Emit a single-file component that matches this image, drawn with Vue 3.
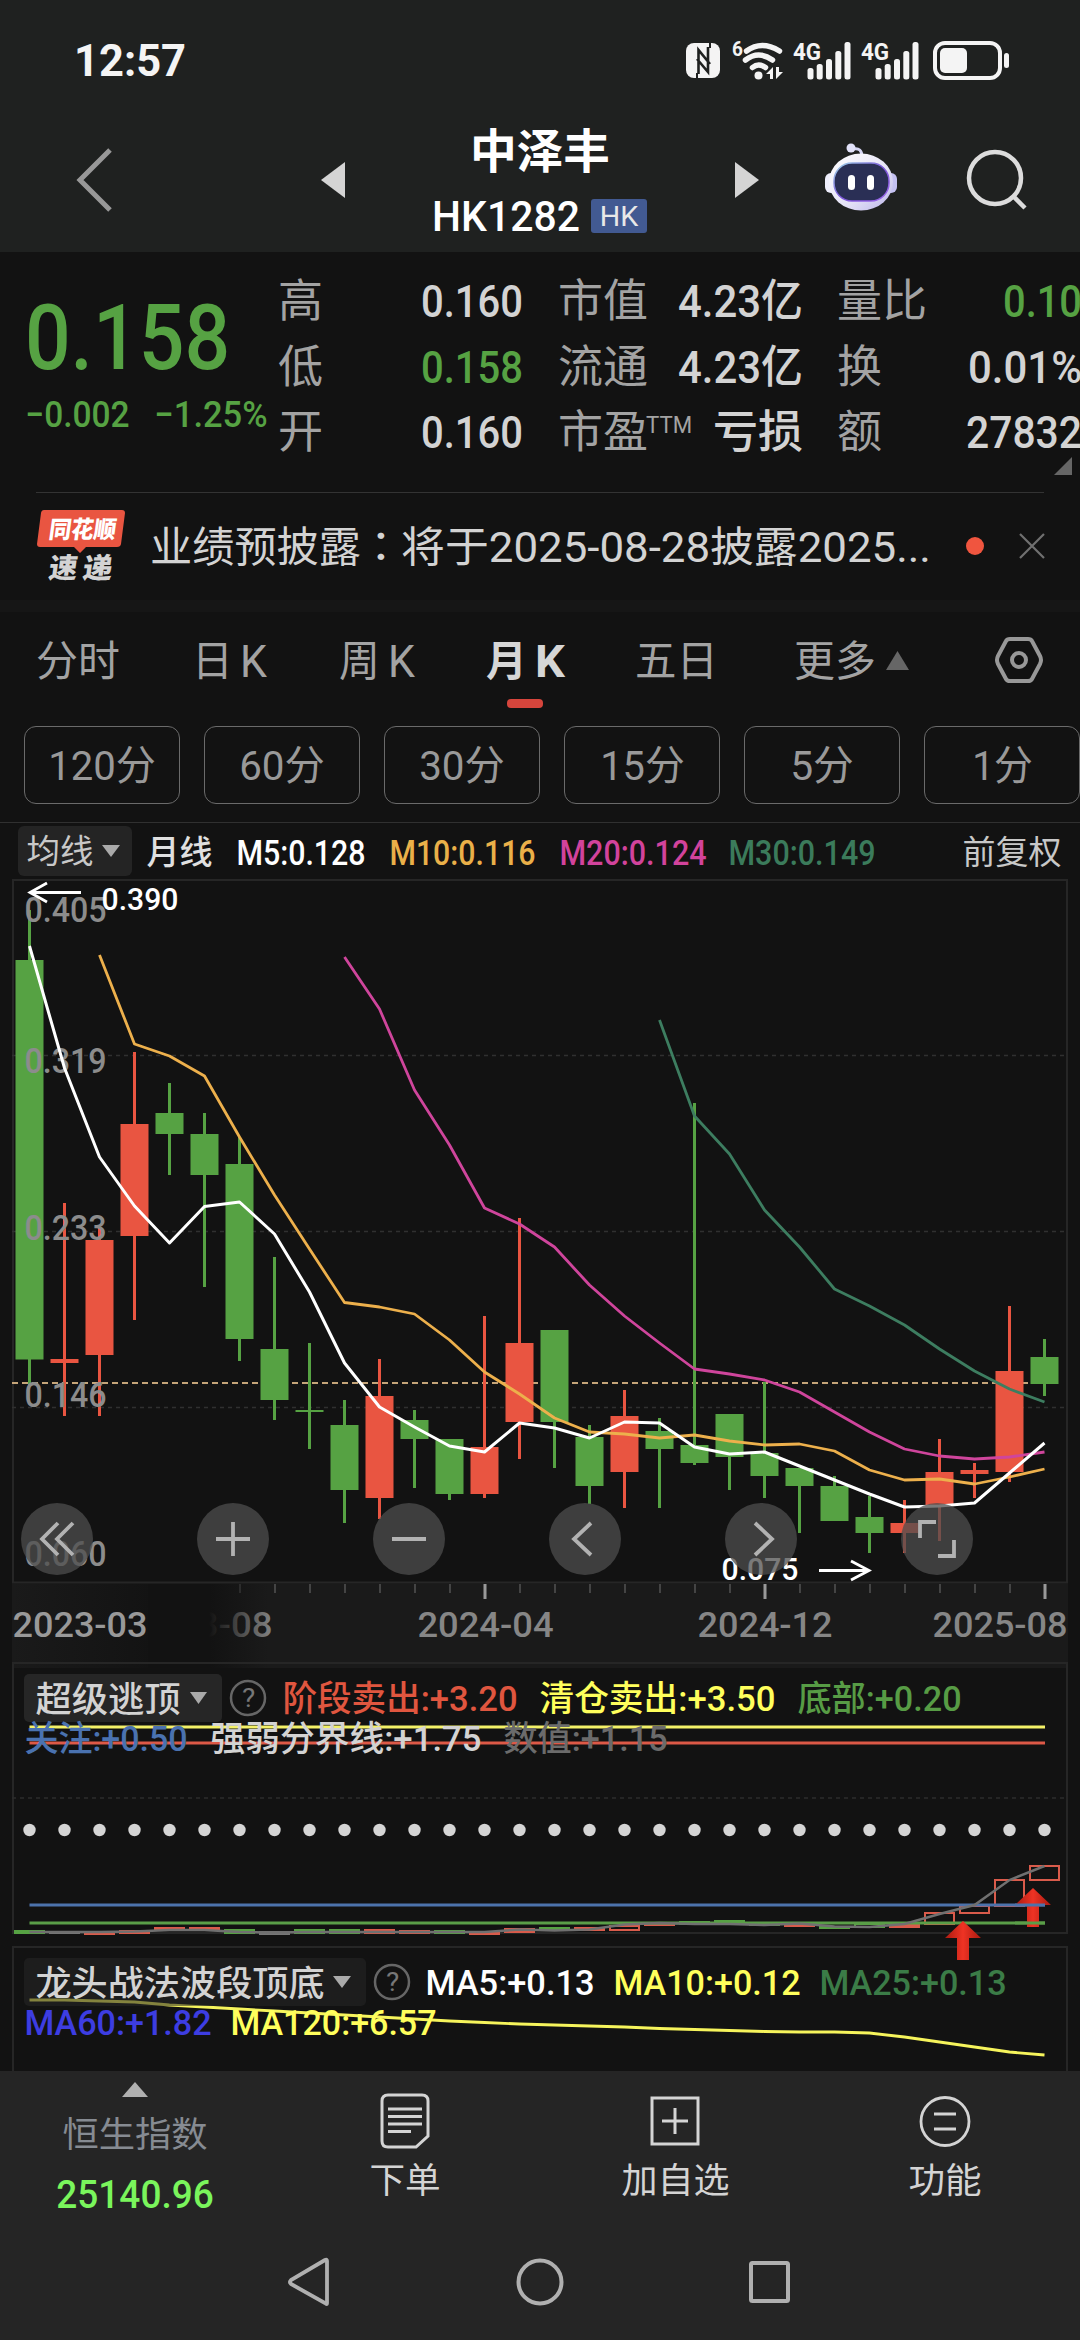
<script setup>
import { h } from 'vue'

// Single line of text whose box is its visible extent: w wide, cap-height tall
const Fit = (p) => {
  const cap = Number(p.h)
  const w = Number(p.w)
  const size = cap / 0.711
  const pad = size * 0.045
  return h('svg', { width: w, height: cap, overflow: 'visible', style: { flex: 'none', display: 'block' } }, [
    h('text', {
      x: -pad,
      y: cap,
      textLength: w + pad * 2,
      lengthAdjust: 'spacingAndGlyphs',
      'font-size': size,
      'font-weight': p.b || 400,
      fill: p.c || 'currentColor'
    }, p.t)
  ])
}
Fit.props = ['t', 'w', 'h', 'b', 'c']

const RED = '#e95541'
const GREEN = '#56a243'

const quote = [
  [
    { l: '高', lw: 41, v: '0.160', vw: 98 },
    { l: '低', lw: 41, v: '0.158', vw: 98, c: GREEN },
    { l: '开', lw: 41, v: '0.160', vw: 98 }
  ],
  [
    { l: '市值', lw: 86, v: '4.23亿', vw: 121 },
    { l: '流通', lw: 86, v: '4.23亿', vw: 121 },
    { l: '市盈', lw: 86, sup: 'TTM', v: '亏损', vw: 86 }
  ],
  [
    { l: '量比', lw: 86, v: '0.10', vw: 75, c: GREEN },
    { l: '换', lw: 41, v: '0.01%', vw: 110 },
    { l: '额', lw: 41, v: '27832', vw: 112 }
  ]
]

const chips = [
  ['120分', 104], ['60分', 82], ['30分', 82], ['15分', 81], ['5分', 60], ['1分', 57]
]

const px = (i) => 29.5 + 35 * i
const line = (start, ys) => ys.map((y, k) => `${px(start + k)},${y}`).join(' ')

// up flag, high, body top, body bottom, low
const candles = [
  [0, 910, 960, 1359.5, 1385], [1, 1203, 1359, 1363, 1416], [1, 1227, 1240, 1355, 1416],
  [1, 1052, 1124, 1236, 1320], [0, 1083, 1113, 1134, 1175], [0, 1113, 1134, 1175, 1287],
  [0, 1137, 1164, 1339, 1361], [0, 1257, 1349, 1400, 1420], [0, 1343, 1410, 1412, 1449],
  [0, 1400, 1425, 1490, 1523], [1, 1359, 1396, 1498, 1519], [0, 1410, 1420, 1439, 1488],
  [0, 1439, 1439, 1494, 1500], [1, 1316, 1447, 1494, 1498], [1, 1218, 1343, 1422, 1459],
  [0, 1330, 1330, 1422, 1468], [0, 1425, 1437, 1486, 1504], [1, 1390, 1416, 1472, 1508],
  [0, 1418, 1431, 1449, 1508], [0, 1103, 1445, 1463, 1465], [0, 1414, 1414, 1457, 1490],
  [0, 1382, 1453, 1476, 1498], [0, 1468, 1468, 1486, 1533], [0, 1476, 1486, 1521, 1521],
  [0, 1496, 1517, 1533, 1553], [1, 1500, 1523, 1533, 1553], [1, 1439, 1472, 1506, 1541],
  [1, 1463, 1470, 1474, 1498], [1, 1306, 1371, 1472, 1482], [0, 1339, 1357, 1384, 1396]
]

const averages = [
  { c: '#3d7d60', w: 2.8, p: line(18, [1020, 1116, 1154, 1210, 1247, 1289, 1306, 1325, 1349, 1371, 1389, 1402]) },
  { c: '#cf459c', w: 2.8, p: line(9, [957, 1009, 1090, 1145, 1208, 1224, 1247, 1285, 1316, 1343, 1369, 1374, 1380, 1392, 1412, 1432, 1449, 1456, 1459, 1457, 1452]) },
  { c: '#edb04c', w: 2.8, p: line(2, [955, 1044, 1056, 1076, 1137, 1195, 1249, 1302.5, 1307, 1314, 1340, 1372, 1394, 1418, 1432, 1434, 1438, 1435, 1441, 1445, 1444, 1451, 1470, 1480, 1479, 1484, 1477, 1469]) },
  { c: '#ffffff', w: 3, p: line(0, [946, 1068, 1157, 1206, 1243, 1206.5, 1202, 1234, 1292, 1363, 1407, 1427, 1446, 1452, 1423, 1428, 1438, 1422, 1423, 1447, 1454, 1452, 1466, 1480, 1494, 1507, 1506, 1503, 1473, 1443]) }
]

const scale = [['0.405', 897], ['0.319', 1048], ['0.233', 1215], ['0.146', 1382], ['0.060', 1541]]
const ticks = Array.from({ length: 24 }, (_, k) => k + 6)
const dots = Array.from({ length: 30 }, (_, k) => k)

// colour, top, bottom of each small indicator box
const boxes = [
  ['g', 1931, 1933], ['n', 1932, 1933], ['r', 1933, 1934], ['r', 1931, 1933], ['r', 1928, 1930], ['r', 1928, 1930],
  ['g', 1930, 1933], ['n', 1932, 1934], ['g', 1930, 1933], ['g', 1930, 1933], ['r', 1930, 1933], ['r', 1931, 1933],
  ['g', 1931, 1933], ['r', 1932, 1934], ['r', 1929, 1932], ['g', 1928, 1930], ['r', 1928, 1930], ['r', 1926, 1930],
  ['r', 1924, 1925], ['g', 1922, 1924], ['g', 1921, 1923], ['g', 1924, 1925], ['r', 1925, 1926], ['g', 1927, 1928],
  ['g', 1924, 1927], ['r', 1925, 1927], ['r', 1913, 1924], ['r', 1906, 1913], ['r', 1880, 1906], ['r', 1866, 1880]
]
const boxColor = { g: '#56a243', r: '#d95b4b', n: '#777' }
const trend = line(0, [1932, 1932, 1932, 1931.5, 1930, 1930, 1932, 1932.5, 1932, 1932, 1932, 1932, 1932, 1932, 1929.5, 1930.5, 1929.5, 1924.5, 1923, 1924, 1924, 1925, 1923.5, 1926.5, 1927, 1924, 1914, 1905, 1880, 1866])
const ma120 = line(0, [2000, 2000, 2001, 2002, 2005, 2007, 2009, 2011, 2013, 2015, 2017, 2019, 2021, 2022.5, 2024, 2025, 2026, 2027, 2028.5, 2029.5, 2030.5, 2031.5, 2032, 2032, 2033, 2037, 2042, 2047, 2052, 2055])

const tools = [
  'M37 20 21 36 37 52 M52 20 36 36 52 52',
  'M36 19V53 M19 36H53',
  'M19 36H53',
  'M42 20 25 36 42 52',
  'M30 20 47 36 30 52',
  'M19 35V19H35 M53 37V53H37'
]
</script>

<template>
  <main class="page">
    <header class="head">
      <div class="status">
        <Fit t="12:57" w="108" h="32" b="700" />
        <svg width="324" height="42" viewBox="686 38 324 42">
          <rect x="686" y="42" width="34" height="35" rx="8" fill="#f4f4f4" />
          <path d="M698.500 73V49L710 63M708 46v25L697 58" fill="none" stroke="#1f2120" stroke-width="2.600" />
          <path d="M697 78v-6M710 41v6" stroke="#1f2120" stroke-width="2" />
          <Fit t="6" x="733" y="40" w="9" h="15" b="700" />
          <g fill="none" stroke="#f4f4f4" stroke-width="5.500" stroke-linecap="round">
            <path d="M746.500 50q15-11 33 0" />
            <path d="M745.500 59q13-10 27 0" />
            <path d="M752.500 66.500q6-5 13 0" />
          </g>
          <circle cx="758.500" cy="74.500" r="4" fill="#f4f4f4" />
          <path d="M773 66v12h-3v-5h-4l7-7zM776 78V66h3v5h4l-7 7z" fill="#f4f4f4" />
          <g v-for="o in [0, 68]" :key="o" fill="#f4f4f4" :transform="`translate(${o} 0)`">
            <Fit t="4G" x="794" y="42" w="26" h="17" b="700" />
            <rect x="807.500" y="67" width="6" height="11.500" rx="2.500" />
            <rect x="816.700" y="63" width="6" height="15.500" rx="2.500" />
            <rect x="826" y="58" width="6" height="20.500" rx="2.500" />
            <rect x="835.300" y="50" width="6" height="28.500" rx="2.500" />
            <rect x="844.500" y="41" width="6" height="37.500" rx="2.500" />
          </g>
          <rect x="935" y="42" width="65" height="35" rx="10" fill="none" stroke="#f4f4f4" stroke-width="4" />
          <rect x="940" y="47" width="27" height="25" rx="5" fill="#f4f4f4" />
          <rect x="1004" y="52" width="5" height="15" rx="2.500" fill="#f4f4f4" />
        </svg>
      </div>
      <div class="nav">
        <svg class="back" width="36" height="64"><path d="M34 2 4 32 34 62" fill="none" stroke="#989898" stroke-width="5" /></svg>
        <svg class="prev" width="24" height="36"><path d="M24 0V36L0 18z" fill="#d4d4d4" /></svg>
        <div class="title">
          <Fit t="中泽丰" w="136" h="33" b="700" />
          <div class="code">
            <Fit t="HK1282" w="144" h="30" b="500" />
            <span class="market"><Fit t="HK" w="36" h="20" /></span>
          </div>
        </div>
        <svg class="next" width="24" height="36"><path d="M0 0V36L24 18z" fill="#d4d4d4" /></svg>
        <svg class="robot" width="72" height="68" viewBox="0 0 72 68">
          <defs>
            <linearGradient id="shell" x1="0" y1="0" x2="1" y2="1"><stop offset="0" stop-color="#fff" /><stop offset=".6" stop-color="#e4e2f6" /><stop offset="1" stop-color="#b9b3ea" /></linearGradient>
            <linearGradient id="rim" x1="0" y1="0" x2="1" y2="1"><stop offset="0" stop-color="#9fd8e8" /><stop offset=".5" stop-color="#7a55d8" /><stop offset="1" stop-color="#9c66ea" /></linearGradient>
          </defs>
          <path d="M28 6q9-2 9 8" fill="none" stroke="#d5d5f4" stroke-width="3" />
          <circle cx="26" cy="5" r="4.500" fill="#e2e2fa" />
          <rect x="0" y="30" width="14" height="20" rx="6" fill="#eeeefc" />
          <rect x="58" y="30" width="14" height="20" rx="6" fill="#c4c1f2" />
          <ellipse cx="36" cy="39" rx="32" ry="28.500" fill="url(#shell)" />
          <rect x="9" y="20" width="55" height="38" rx="18" fill="#2a2f55" stroke="url(#rim)" stroke-width="1.500" />
          <rect x="23" y="32" width="7" height="15" rx="3.500" fill="#fff" />
          <rect x="42" y="32" width="7" height="15" rx="3.500" fill="#fff" />
        </svg>
        <svg class="search" width="62" height="62"><g fill="none" stroke="#dcdcdc" stroke-width="4.500"><circle cx="29" cy="29" r="26" /><path d="M48 48 59 59" /></g></svg>
      </div>
    </header>

    <section class="quote">
      <div class="last">
        <Fit t="0.158" w="197" h="65" b="500" />
        <div class="delta">
          <Fit t="−0.002" w="101" h="26" b="500" />
          <Fit t="−1.25%" w="110" h="26" b="500" />
        </div>
      </div>
      <div v-for="(col, ci) in quote" :key="ci" class="col">
        <div v-for="r in col" :key="r.l" class="pair">
          <div class="label">
            <Fit :t="r.l" :w="r.lw" h="32" />
            <Fit v-if="r.sup" :t="r.sup" w="44" h="17" />
          </div>
          <Fit :t="r.v" :w="r.vw" h="32" b="500" :c="r.c || '#d3d3d3'" />
        </div>
      </div>
      <svg class="corner" width="18" height="18"><path d="M18 0V18H0z" fill="#666" /></svg>
    </section>

    <section class="news">
      <svg class="brand" width="90" height="74" viewBox="36 509 90 74">
        <path d="M44 510H122q3 0 3 3L121 544q-.5 3-4 3H86l-6 6-6-6H40q-3 0-3-3L41 513q.5-3 3-3z" fill="#e95541" />
        <g transform="translate(49 537.500) skewX(-8)"><Fit t="同花顺" y="-17" w="65" h="17" b="900" c="#fff" /></g>
        <g transform="translate(49 578) skewX(-8)"><Fit t="速" y="-20" w="26" h="20" b="900" c="#d3d3d3" /><Fit t="递" x="34" y="-20" w="27" h="20" b="900" c="#d3d3d3" /></g>
      </svg>
      <div class="headline">
        <Fit t="业绩预披露" w="207" h="30" />
        <Fit class="colon" t="：" w="40" h="30" />
        <Fit t="将于2025-08-28披露2025..." w="526" h="30" />
      </div>
      <i class="dot"></i>
      <svg class="close" width="26" height="26"><path d="M1 1 25 25M25 1 1 25" stroke="#707070" stroke-width="2.200" /></svg>
    </section>

    <nav class="tabs">
      <Fit t="分时" w="80" h="30" />
      <div class="tab dk"><Fit t="日" w="37" h="30" /><Fit t="K" w="23" h="31" /></div>
      <div class="tab wk"><Fit t="周" w="37" h="30" /><Fit t="K" w="23" h="31" /></div>
      <div class="tab mk"><Fit t="月" w="37" h="30" b="700" /><Fit t="K" w="26" h="31" b="700" /></div>
      <Fit class="fd" t="五日" w="79" h="30" />
      <Fit class="more" t="更多" w="78" h="30" />
      <svg class="caret" width="23" height="19"><path d="M11.500 0 23 19H0z" fill="#666" /></svg>
      <svg class="gear" width="48" height="46"><g fill="none" stroke="#989898" stroke-width="4"><path d="M15 2H33Q36 2 37 4L45 19Q47 23 45 27L37 42Q36 44 33 44H15Q12 44 11 42L3 27Q1 23 3 19L11 4Q12 2 15 2z" /><circle cx="24" cy="23" r="7" /></g></svg>
    </nav>

    <div class="chips">
      <span v-for="c in chips" :key="c[0]" class="chip"><Fit :t="c[0]" :w="c[1]" h="29" /></span>
    </div>

    <div class="legend">
      <span class="pick"><Fit t="均线" w="64" h="23.500" /><svg width="18" height="12"><path d="M0 0H18L9 12z" fill="#aaa" /></svg></span>
      <Fit class="g16" t="月线" w="63" h="23.500" b="500" c="#e0e0e0" />
      <Fit class="g27" t="M5:0.128" w="126" h="25" b="500" c="#fff" />
      <Fit class="g27" t="M10:0.116" w="143" h="25" b="500" c="#eab049" />
      <Fit class="g27" t="M20:0.124" w="144" h="25" b="500" c="#d2439c" />
      <Fit class="g25" t="M30:0.149" w="144" h="25" b="500" c="#3b7b5b" />
      <Fit class="adj" t="前复权" w="96" h="23.500" />
    </div>

    <section class="chart">
      <svg width="1080" height="1194" viewBox="0 877 1080 1194">
        <defs>
          <linearGradient id="axisL"><stop offset="0" stop-color="#121212" stop-opacity="0" /><stop offset=".62" stop-color="#121212" /><stop offset=".77" stop-color="#121212" /><stop offset="1" stop-color="#121212" stop-opacity="0" /></linearGradient>
          <linearGradient id="arrow" x1="0" y1="0" x2="1" y2="0"><stop offset="0" stop-color="#a81a10" /><stop offset=".5" stop-color="#ef3324" /><stop offset="1" stop-color="#a81a10" /></linearGradient>
        </defs>

        <path d="M13 1582.500V880H1067V1582.500z" fill="none" stroke="#262626" stroke-width="2" />
        <path d="M12 1055.500H1066M12 1231.500H1066M12 1407.500H1066" stroke="#303030" stroke-width="1.300" stroke-dasharray="4 4" />
        <path d="M12 1383H1062" stroke="#c4a479" stroke-width="2" stroke-dasharray="6 4" />
        <g v-for="(c, i) in candles" :key="i" :fill="c[0] ? RED : GREEN">
          <rect :x="px(i) - 1.500" :y="c[1]" width="3" :height="c[4] - c[1]" />
          <rect :x="px(i) - 14" :y="c[2]" width="28" :height="c[3] - c[2]" />
        </g>
        <Fit v-for="s in scale" :key="s[0]" :t="s[0]" x="26" :y="s[1]" w="79" h="25" b="500" c="#8c8c8c" />
        <polyline v-for="a in averages" :key="a.c" :points="a.p" :stroke="a.c" :stroke-width="a.w" fill="none" stroke-linejoin="round" />
        <g fill="none" stroke="#fff" stroke-width="2.800">
          <path d="M81 892.500H30M47 883 30 892.500 47 902" />
          <path d="M819 1570.500H869M851 1561 869 1570.500 851 1580" />
        </g>
        <Fit t="0.390" x="103" y="887.500" w="74" h="22.500" b="500" c="#fff" />
        <Fit t="0.075" x="723" y="1557.500" w="74" h="22.500" b="500" c="#fff" />

        <rect x="12" y="1584" width="1056" height="84" fill="#1a1a1a" />
        <g v-for="i in ticks" :key="i">
          <rect v-if="i === 13 || i === 21 || i === 29" :x="px(i) - 1" y="1584" width="3" height="15" fill="#999" />
          <rect v-else :x="px(i) - .5" y="1584" width="2" height="9" fill="#444" />
        </g>
        <Fit t="2023-08" x="137" y="1612" w="134" h="25" b="500" c="#7c7c7c" />
        <rect x="12" y="1584" width="136" height="84" fill="#1a1a1a" />
        <rect x="148" y="1584" width="57" height="84" fill="#121212" />
        <rect x="12" y="1584" width="256" height="84" fill="url(#axisL)" />
        <Fit t="2023-03" x="14" y="1612" w="132" h="25" b="500" c="#999" />
        <Fit t="2024-04" x="419" y="1612" w="133" h="25" b="500" c="#868686" />
        <Fit t="2024-12" x="699" y="1612" w="132" h="25" b="500" c="#868686" />
        <Fit t="2025-08" x="934" y="1612" w="132" h="25" b="500" c="#868686" />

        <path d="M13 1933V1663H1067V1933z" fill="none" stroke="#262626" stroke-width="2" />
        <path d="M12 1798H1066" stroke="#2c2c2c" stroke-width="1.500" stroke-dasharray="4 4" />
        <rect x="24" y="1674" width="198" height="48" rx="5" fill="#262626" />
        <path d="M29.500 1727H1045" stroke="#f3f168" stroke-width="3" />
        <path d="M29.500 1743H1045" stroke="#dd5947" stroke-width="3" />
        <circle v-for="i in dots" :key="i" :cx="px(i)" cy="1830" r="6.200" fill="#d5d5d5" />
        <rect v-for="(b, i) in boxes" :key="'b' + i" :x="px(i) - 14.500" :y="b[1]" width="29" :height="b[2] - b[1]" fill="none" :stroke="boxColor[b[0]]" stroke-width="2" />
        <path d="M29.500 1923H1045" stroke="#5a9e48" stroke-width="3" />
        <path d="M29.500 1905H1045" stroke="#4c72ab" stroke-width="3" />
        <polyline :points="trend" fill="none" stroke="#707070" stroke-width="2.500" />

        <path d="M13 2071V1947H1067V2071" fill="none" stroke="#262626" stroke-width="2" />
        <path v-for="a in [[963, 1921], [1033, 1888]]" :key="a[0]" :transform="`translate(${a[0]} ${a[1]})`" d="M0 0 18 17H6V39H-6V17H-18z" fill="url(#arrow)" />
        <path d="M1015 1905H1045" stroke="#4c72ab" stroke-width="3" />
        <path d="M1015 1923H1045" stroke="#5a9e48" stroke-width="3" />
        <polyline :points="ma120" fill="none" stroke="#f6f45c" stroke-width="2.800" />
        <rect x="24" y="1958" width="342" height="48" rx="5" fill="#262626" fill-opacity=".55" />

        <Fit t="超级逃顶" x="37" y="1687" w="142" h="25" b="500" c="#d3d3d3" />
        <path d="M190 1692H207L198.500 1704z" fill="#aaa" />
        <circle cx="248" cy="1698" r="17" fill="none" stroke="#666" stroke-width="2.500" />
        <Fit t="?" x="243" y="1689" w="11" h="18" c="#777" />
        <Fit t="阶段卖出:+3.20" x="284" y="1686" w="232" h="25" b="500" c="#e0563f" />
        <Fit t="清仓卖出:+3.50" x="541" y="1686" w="233" h="25" b="500" c="#ffff5c" />
        <Fit t="底部:+0.20" x="799" y="1686" w="161" h="25" b="500" c="#579c45" />
        <Fit t="关注:+0.50" x="26" y="1726" w="160" h="25" b="500" c="#4a72b0" />
        <Fit t="强弱分界线:+1.75" x="212" y="1726" w="268" h="25" b="500" c="#d3d3d3" />
        <Fit t="数值:+1.15" x="505" y="1726" w="161" h="25" b="500" c="#6b6b6b" />

        <Fit t="龙头战法波段顶底" x="37" y="1971" w="286" h="25" b="500" c="#d3d3d3" />
        <path d="M333 1976H351L342 1988z" fill="#aaa" />
        <circle cx="392" cy="1982" r="17" fill="none" stroke="#666" stroke-width="2.500" />
        <Fit t="?" x="387" y="1973" w="11" h="18" c="#777" />
        <Fit t="MA5:+0.13" x="427" y="1970" w="166" h="25" b="500" c="#fff" />
        <Fit t="MA10:+0.12" x="615" y="1970" w="184" h="25" b="500" c="#ffff5c" />
        <Fit t="MA25:+0.13" x="821" y="1970" w="184" h="25" b="500" c="#3b7c47" />
        <Fit t="MA60:+1.82" x="26" y="2010" w="184" h="25" b="500" c="#3d3de2" />
        <Fit t="MA120:+6.57" x="232" y="2010" w="203" h="25" b="500" c="#ffff5c" />
      </svg>
      <div class="tools">
        <svg v-for="(d, i) in tools" :key="i" width="72" height="72">
          <circle cx="36" cy="36" r="36" fill="#4d4d4d" fill-opacity=".75" />
          <path :d="d" fill="none" stroke="#b2b2b2" stroke-width="3.800" />
        </svg>
      </div>
    </section>

    <footer class="foot">
      <div class="actions">
        <div class="cell index">
          <svg width="26" height="15"><path d="M13 0 26 15H0z" fill="#b0b0b0" /></svg>
          <Fit class="iname" t="恒生指数" w="142" h="25" c="#868b92" />
          <Fit class="ival" t="25140.96" w="154" h="27" b="500" c="#7af55c" />
        </div>
        <div class="cell">
          <svg width="50" height="56"><g fill="none" stroke="#d4d4d4" stroke-width="3"><path d="M8 2H42Q48 2 48 8V43L36 54H8Q2 54 2 48V8Q2 2 8 2z" /><path d="M8 16H42M8 23.500H42M8 31H42M8 38.500H31" /></g></svg>
          <Fit class="act" t="下单" w="68" h="25" />
        </div>
        <div class="cell">
          <svg width="50" height="56"><g fill="none" stroke="#d4d4d4" stroke-width="3"><rect x="2" y="5" width="46" height="46" /><path d="M25 15V41M12 28H38" /></g></svg>
          <Fit class="act" t="加自选" w="105" h="25" />
        </div>
        <div class="cell">
          <svg width="52" height="56"><g fill="none" stroke="#d4d4d4" stroke-width="2.800"><circle cx="26" cy="28.500" r="24" /><path d="M15 21H37M15 36H37" /></g></svg>
          <Fit class="act" t="功能" w="70" h="25" />
        </div>
      </div>
      <div class="system">
        <svg width="42" height="50"><path d="M39 4V46Q39 48 37 46L3 27Q1 25 3 23L37 3Q39 2 39 4z" fill="none" stroke="#b0b0b0" stroke-width="3.800" /></svg>
        <svg width="48" height="50"><circle cx="24" cy="25" r="21.500" fill="none" stroke="#b0b0b0" stroke-width="4" /></svg>
        <svg class="recent" width="44" height="50"><rect x="4" y="6" width="37" height="38" rx="1.500" fill="none" stroke="#b0b0b0" stroke-width="4" /></svg>
      </div>
    </footer>
  </main>
</template>

<style>
body { background: #121212; }
</style>

<style scoped>
.page {
  width: 1080px;
  height: 2340px;
  overflow: hidden;
  display: flex;
  flex-direction: column;
  background: #121212;
  color: #a3a3a3;
  font-family: Roboto, "Noto Sans CJK SC", sans-serif;
}
.page svg { display: block; flex: none; overflow: visible; }

.head { height: 252px; background: #1f2120; color: #f4f4f4; flex: none; }
.status { height: 120px; padding: 0 70px 0 76px; display: flex; align-items: center; justify-content: space-between; box-sizing: border-box; }
.nav { display: flex; align-items: flex-start; color: #fff; }
.back { margin: 28px 0 0 76px; }
.prev { margin: 42px 0 0 209px; }
.title { width: 214px; margin: 15px 0 0 88px; display: flex; flex-direction: column; align-items: center; gap: 31px; }
.code { display: flex; align-items: center; gap: 13px; }
.market { width: 56px; height: 34px; border-radius: 3px; background: #425a92; display: flex; align-items: center; justify-content: center; color: #e8e8e8; }
.next { margin: 42px 0 0 88px; }
.robot { margin: 23px 0 0 66px; }
.search { margin: 29px 0 0 69px; }

.quote { position: relative; height: 240px; box-sizing: border-box; display: flex; flex: none; }
.last { width: 251px; padding: 52px 0 0 29px; box-sizing: border-box; color: #56a243; flex: none; margin-right: 29px; }
.delta { display: flex; gap: 28px; margin: 32px 0 0 -2px; }
.col { width: 241px; margin-right: 38.500px; padding-top: 33px; display: flex; flex-direction: column; gap: 33.500px; flex: none; }
.pair { display: flex; justify-content: space-between; }
.label { display: flex; gap: 1px; }
.corner { position: absolute; left: 1054px; top: 205px; }

.news { height: 108px; margin: 0 36px; border-top: 1px solid #333; box-sizing: border-box; display: flex; flex: none; color: #d3d3d3; }
.brand { margin-top: 16px; }
.headline { margin: 39px 0 0 26px; width: 777px; display: flex; justify-content: space-between; flex: none; }
.colon { font-family: "Noto Sans CJK TC", sans-serif; }
.dot { width: 18px; height: 18px; border-radius: 50%; background: #f0553f; margin: 44px 0 0 37px; flex: none; }
.close { margin: 40px 0 0 35px; }

.tabs { height: 126px; border-top: 12px solid #161616; display: flex; padding: 34px 0 0 38px; box-sizing: border-box; flex: none; }
.tab { display: flex; justify-content: space-between; flex: none; }
.dk { width: 71px; margin-left: 76px; }
.wk { width: 72px; margin-left: 76px; }
.mk { width: 75px; margin-left: 75px; color: #d6d6d6; position: relative; }
.mk::after { content: ""; position: absolute; left: 19px; top: 53px; width: 36px; height: 9px; border-radius: 4px; background: #d6453c; }
.fd { margin-left: 74px; }
.more { margin-left: 80px; }
.caret { margin: 5px 0 0 12px; }
.gear { margin: -9px 0 0 86px; }

.chips { height: 96px; display: flex; align-items: flex-start; gap: 24px; padding-left: 24px; flex: none; box-sizing: border-box; }
.chip { width: 156px; height: 78px; box-sizing: border-box; border: 1px solid #6a6a6a; border-radius: 12px; display: flex; align-items: center; justify-content: center; flex: none; color: #999; }

.legend { height: 55px; border-top: 1px solid #303030; padding: 3px 20px 0 18px; box-sizing: border-box; display: flex; align-items: flex-start; flex: none; color: #c8c8c8; }
.legend > svg { margin-top: 14px; }
.pick { width: 114px; height: 50px; box-sizing: border-box; padding: 0 12px 0 10px; background: #242424; border-radius: 6px; display: flex; align-items: center; justify-content: space-between; }
.legend .g16 { margin-left: 16px; }
.legend .g27 { margin-left: 27px; }
.legend .g25 { margin-left: 25px; }
.legend .adj { margin-left: auto; }

.chart { position: relative; height: 1194px; flex: none; }
.tools { position: absolute; left: 21px; top: 626px; display: flex; gap: 104px; }

.foot { height: 269px; background: #252525; color: #d4d4d4; flex: none; }
.actions { display: flex; height: 184px; }
.cell { width: 270px; padding-top: 22px; box-sizing: border-box; display: flex; flex-direction: column; align-items: center; }
.index { padding-top: 11px; }
.iname { margin-top: 25px; }
.ival { margin-top: 34px; }
.act { margin-top: 19px; }
.system { display: flex; padding: 2px 0 0 288px; gap: 186px; }
.recent { margin-left: -3px; }
</style>
